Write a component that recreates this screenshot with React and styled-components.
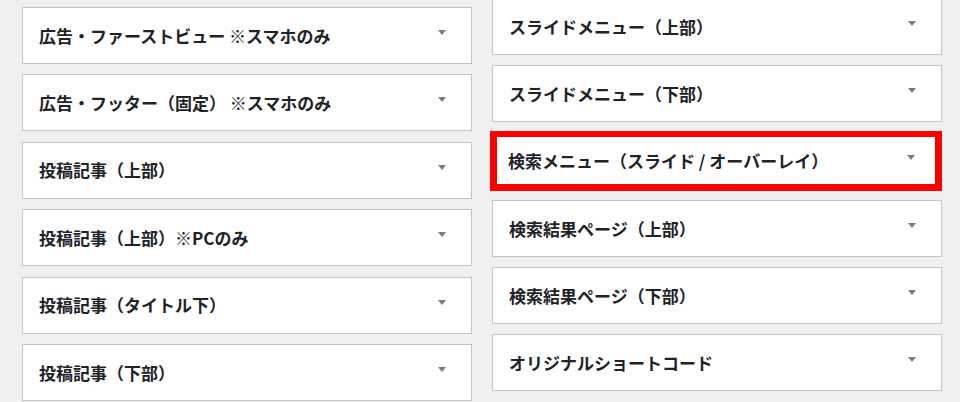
import React from "react";
import styled, { createGlobalStyle } from "styled-components";

const Global = createGlobalStyle`
  html, body {
    margin: 0;
    padding: 0;
    background: #f0f0f1;
    overflow: hidden;
  }
  body {
    font-family: "Noto Sans CJK JP", "Noto Sans", sans-serif;
    color: #1d2327;
  }
`;

const Page = styled.div`
  display: grid;
  grid-template-columns: 450px 450px;
  column-gap: 20px;
  align-items: start;
  padding: 7px 0 0 22px;
  height: 402px;
  box-sizing: border-box;
  overflow: hidden;
`;

const Column = styled.div`
  display: flex;
  flex-direction: column;
  gap: ${(p) => p.$gap}px;
  margin-top: ${(p) => p.$offset || 0}px;
`;

const Widget = styled.div`
  box-sizing: border-box;
  height: ${(p) => (p.$highlight ? 60 : 57)}px;
  display: flex;
  align-items: center;
  justify-content: space-between;
  background: #fff;
  border: ${(p) => (p.$highlight ? "7px solid #ff0000" : "1px solid #c3c4c7")};
  border-top-width: ${(p) => (p.$highlight ? 6 : 1)}px;
  margin: ${(p) => (p.$highlight ? "-1px 0 -1px -2px" : "0")};
  padding: ${(p) => (p.$highlight ? "0 20px 0 11px" : "0 25px 0 16px")};
`;

const Title = styled.h3`
  margin: 0;
  font-size: 17px;
  font-weight: 700;
  line-height: 1.4;
  white-space: nowrap;
  color: #1d2327;
`;

const Toggle = styled.span`
  width: 0;
  height: 0;
  border-left: 4px solid transparent;
  border-right: 4px solid transparent;
  border-top: 5px solid #787c82;
  margin-bottom: 6px;
`;

const left = [
  "広告・ファーストビュー ※スマホのみ",
  "広告・フッター（固定） ※スマホのみ",
  "投稿記事（上部）",
  "投稿記事（上部）※PCのみ",
  "投稿記事（タイトル下）",
  "投稿記事（下部）",
];

const right = [
  { t: "スライドメニュー（上部）" },
  { t: "スライドメニュー（下部）" },
  { t: "検索メニュー（スライド / オーバーレイ）", h: true },
  { t: "検索結果ページ（上部）" },
  { t: "検索結果ページ（下部）" },
  { t: "オリジナルショートコード" },
];

function Item({ title, highlight }) {
  return (
    <Widget $highlight={highlight}>
      <Title>{title}</Title>
      <Toggle />
    </Widget>
  );
}

export default function App() {
  return (
    <>
      <Global />
      <Page>
        <Column $gap={10.4}>
          {left.map((t) => (
            <Item key={t} title={t} />
          ))}
        </Column>
        <Column $gap={10} $offset={-9}>
          {right.map((r) => (
            <Item key={r.t} title={r.t} highlight={r.h} />
          ))}
        </Column>
      </Page>
    </>
  );
}
